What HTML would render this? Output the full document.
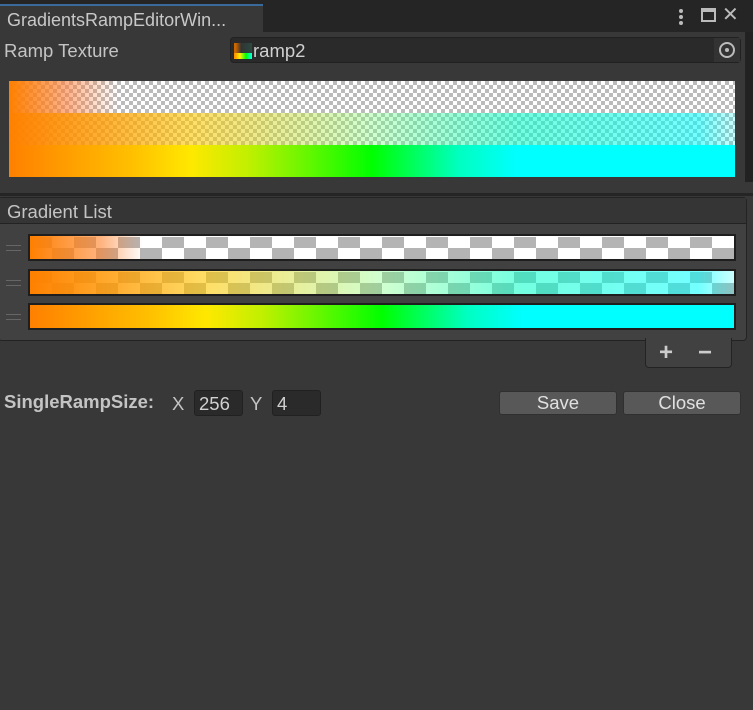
<!DOCTYPE html>
<html><head><style>
*{margin:0;padding:0;box-sizing:border-box}
body{width:753px;height:710px;background:#383838;font-family:"Liberation Sans",sans-serif;color:#c4c4c4;position:relative;overflow:hidden;font-size:18.5px}
.a{position:absolute}
.chk{background-color:#fff;background-image:linear-gradient(45deg,#bbb 25%,transparent 25%,transparent 75%,#bbb 75%),linear-gradient(45deg,#bbb 25%,transparent 25%,transparent 75%,#bbb 75%);background-size:8px 8px;background-position:0 0,4px 4px}
.chk2{background-color:#fff;background-image:linear-gradient(90deg,#b4b4b4 50%,transparent 50%),linear-gradient(90deg,transparent 50%,#b4b4b4 50%);background-size:44px 11px,44px 11px;background-repeat:repeat-x;background-position:0 1px,0 12px}
.bar{position:absolute;left:28px;width:708px;height:27px;border:2px solid #1e1e1e}
.h{position:absolute;left:6px;width:15px;height:1px;background:#666}
</style></head><body>
<div class="a" style="left:0;top:0;width:753px;height:32px;background:#252525"></div>
<div class="a" style="left:0;top:4px;width:263px;height:28px;background:#383838;border-top:2px solid #3a6a9a"></div>
<div class="a" style="left:7px;top:10px;font-size:18px;color:#c8c8c8">GradientsRampEditorWin...</div>
<div class="a" style="left:679px;top:9px;width:4px;height:4px;border-radius:2px;background:#bbb;box-shadow:0 6px 0 #bbb,0 12px 0 #bbb"></div>
<div class="a" style="left:701px;top:8px;width:15px;height:14px;border:2px solid #bbb;border-top-width:4px"></div>
<div class="a" style="left:722px;top:2px;font-size:20px;color:#bbb">✕</div>
<div class="a" style="left:745px;top:32px;width:8px;height:150px;background:#222"></div>
<div class="a" style="left:4px;top:40px">Ramp Texture</div>
<div class="a" style="left:230px;top:37px;width:511px;height:26px;background:#2a2a2a;border:1px solid #212121;border-radius:4px"></div>
<div class="a" style="left:234px;top:43px;width:18px;height:16px;background:linear-gradient(90deg,#f80,#fe0,#0f0,#0ff);"></div>
<div class="a" style="left:234px;top:43px;width:18px;height:10px;background:linear-gradient(90deg,#c60 10%,#333 40%,#2a4a40)"></div>
<div class="a" style="left:253px;top:40px;color:#d0d0d0">ramp2</div>
<div class="a" style="left:714px;top:38px;width:26px;height:24px;background:#333"></div>
<div class="a" style="left:719px;top:42px;width:16px;height:16px;border:2px solid #bbb;border-radius:50%"></div>
<div class="a" style="left:725px;top:48px;width:4px;height:4px;background:#bbb;border-radius:50%"></div>
<div class="a chk" style="left:9px;top:81px;width:726px;height:64px"></div>
<div class="a" style="left:9px;top:81px;width:726px;height:32px;background:linear-gradient(90deg,#ff8000,rgba(255,128,60,.6) 8%,rgba(255,200,180,0) 15%)"></div>
<div class="a" style="left:9px;top:113px;width:726px;height:32px;background:linear-gradient(90deg,rgba(255,128,0,1),rgba(255,200,0,.6) 25%,rgba(120,255,120,.35) 50%,rgba(0,255,200,.55) 70%,rgba(0,255,255,.55) 95%,rgba(0,255,255,.2))"></div>
<div class="a" style="left:9px;top:145px;width:726px;height:32px;background:linear-gradient(90deg,#ff8000,#ffc000 17%,#ffe800 25%,#c0f000 33%,#00ff00 50%,#00ffc0 62%,#00ffff 70%)"></div>
<div class="a" style="left:0;top:193px;width:753px;height:3px;background:#252525"></div>
<div class="a" style="left:-2px;top:197px;width:749px;height:144px;background:#414141;border:1px solid #232323;border-radius:4px"></div>
<div class="a" style="left:-1px;top:198px;width:747px;height:26px;background:#353535;border-bottom:1px solid #232323"></div>
<div class="a" style="left:7px;top:201px">Gradient List</div>
<div class="h" style="top:245px"></div><div class="h" style="top:250px"></div>
<div class="h" style="top:280px"></div><div class="h" style="top:285px"></div>
<div class="h" style="top:314px"></div><div class="h" style="top:319px"></div>
<div class="bar chk2" style="top:234px"></div>
<div class="bar" style="top:234px;background:linear-gradient(90deg,#ff8000,rgba(255,128,40,.6) 10%,rgba(255,200,180,0) 16%);border-color:#1e1e1e"></div>
<div class="bar chk2" style="top:269px"></div>
<div class="bar" style="top:269px;background:linear-gradient(90deg,rgba(255,128,0,1),rgba(255,200,0,.6) 25%,rgba(120,255,120,.35) 50%,rgba(0,255,200,.55) 70%,rgba(0,255,255,.55) 95%,rgba(0,255,255,.2))"></div>
<div class="bar" style="top:303px;background:linear-gradient(90deg,#ff8000,#ffc000 17%,#ffe800 25%,#c0f000 33%,#00ff00 50%,#00ffc0 62%,#00ffff 70%)"></div>
<div class="a" style="left:645px;top:338px;width:87px;height:30px;background:#414141;border:1px solid #232323;border-top:none;border-radius:0 0 4px 4px"></div>
<div class="a" style="left:659px;top:339px;font-size:24px;color:#ccc;font-weight:bold">+</div>
<div class="a" style="left:698px;top:339px;font-size:24px;color:#ccc;font-weight:bold">−</div>
<div class="a" style="left:4px;top:391px;font-weight:bold">SingleRampSize:</div>
<div class="a" style="left:172px;top:393px">X</div>
<div class="a" style="left:194px;top:390px;width:49px;height:26px;background:#2a2a2a;border:1px solid #212121;border-radius:3px;padding:2px 4px;color:#d0d0d0">256</div>
<div class="a" style="left:250px;top:393px">Y</div>
<div class="a" style="left:272px;top:390px;width:49px;height:26px;background:#2a2a2a;border:1px solid #212121;border-radius:3px;padding:2px 4px;color:#d0d0d0">4</div>
<div class="a" style="left:499px;top:391px;width:118px;height:24px;background:#585858;border:1px solid #303030;border-radius:3px;text-align:center;line-height:22px;color:#e0e0e0">Save</div>
<div class="a" style="left:623px;top:391px;width:118px;height:24px;background:#585858;border:1px solid #303030;border-radius:3px;text-align:center;line-height:22px;color:#e0e0e0">Close</div>
</body></html>
